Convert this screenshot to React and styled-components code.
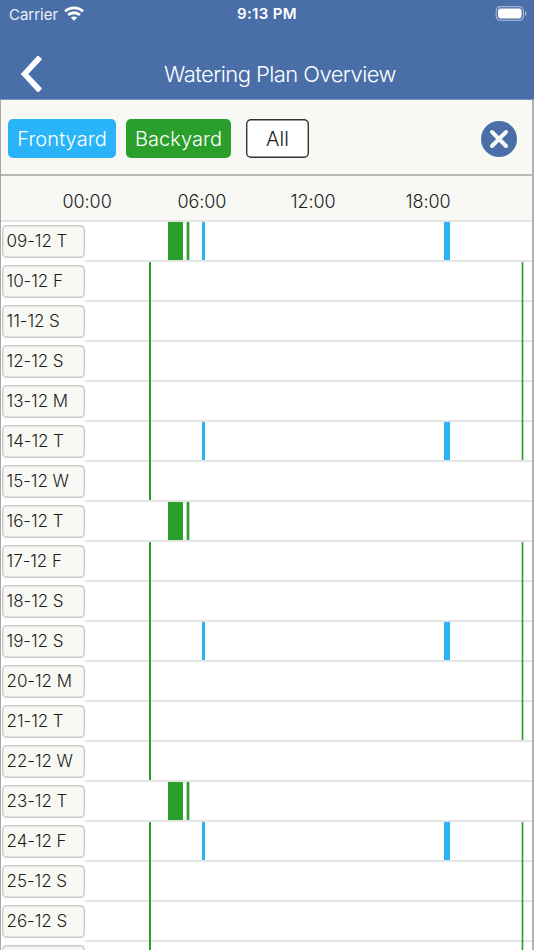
import React from 'react';
import styled, { createGlobalStyle } from 'styled-components';

const BLUE = '#4a6ea8';
const FRONT = '#2ab4f8';
const BACK = '#2a9f2c';

const GlobalStyle = createGlobalStyle`
  *, *::before, *::after { box-sizing: border-box; }
  body { margin: 0; overflow: hidden; font-family: Inter, "Liberation Sans", sans-serif; }
`;

const Screen = styled.div`
  width: 534px;
  height: 950px;
  overflow: hidden;
  display: flex;
  flex-direction: column;
  background: #fff;
`;

const Header = styled.header`
  flex: none;
  height: 100px;
  background: ${BLUE};
  border-bottom: 1px solid #7f94b9;
  color: #fff;
`;

const StatusBar = styled.div`
  display: grid;
  grid-template-columns: 1fr auto 1fr;
  align-items: center;
  height: 28px;
  padding: 0 7px 0 9px;
`;

const Carrier = styled.div`
  display: flex;
  align-items: center;
  gap: 6px;
  font-size: 15px;
  letter-spacing: -0.02px;
  color: #edf1f7;
  svg { margin-top: -2px; }
`;

const Clock = styled.div`
  margin: -1px 2px 0 0;
  font-size: 15px;
  font-weight: 600;
  letter-spacing: 0.32px;
`;

const Battery = styled.svg`
  justify-self: end;
  margin-top: -2px;
`;

const NavBar = styled.div`
  display: grid;
  grid-template-columns: 26px 1fr;
  align-items: center;
  height: 71px;
  padding: 21px 20px 0 20px;
`;

const BackButton = styled.button`
  display: flex;
  padding: 0;
  border: 0;
  background: none;
`;

const Title = styled.h1`
  margin: 0 0 1px;
  text-indent: 0;
  padding-right: 0;
  padding-left: 0;
  font-size: 22px;
  font-weight: 350;
  letter-spacing: -0.57px;
  line-height: 30px;
  text-align: center;
  white-space: nowrap;
`;

const Panel = styled.main`
  flex: 1;
  min-height: 0;
  overflow: hidden;
  border-left: 1px solid #a5a5a5;
  border-right: 2px solid #b2b2b2;
`;

const FilterBar = styled.div`
  display: flex;
  align-items: center;
  height: 76px;
  padding: 3px 15px 0 7px;
  background: #f8f9f4;
  border-bottom: 2px solid #b8b8b6;
`;

const Filter = styled.button`
  width: ${(p) => p.$width}px;
  height: 39px;
  margin-right: ${(p) => p.$gap}px;
  padding: 1px 0 0;
  border: 0;
  box-shadow: ${(p) => (p.$outlined ? 'inset 0 0 0 1.4px #333' : 'none')};
  border-radius: 5px;
  background: ${(p) => p.$color};
  color: ${(p) => (p.$outlined ? '#222' : '#fff')};
  font: 350 20px Inter, "Liberation Sans", sans-serif;
  letter-spacing: 0.08px;
`;

const CloseButton = styled.button`
  display: flex;
  margin-left: auto;
  padding: 0;
  border: 0;
  background: none;
`;

const Axis = styled.div`
  display: grid;
  grid-template-columns: 115px 113px 115px 1fr;
  align-items: center;
  height: 46px;
  padding: 7px 0 0 61.4px;
  background: #f8f9f4;
  border-bottom: 2px solid #e3e4e2;
  color: #1c1c1c;
  font-size: 18px;
  font-weight: 350;
  letter-spacing: -0.05px;
`;

const DayRow = styled.div`
  display: grid;
  grid-template-columns: 84px 1fr;
  height: 40px;
`;

const DayLabel = styled.div`
  height: 33px;
  margin: 3px 0 0 0.6px;
  padding-left: 5px;
  box-shadow: inset 0 0 0 1.4px #c8c8c8;
  border-radius: 5px;
  background: #f8f9f4;
  color: #1c1c1c;
  font-size: 17px;
  font-weight: 350;
  letter-spacing: -0.08px;
  line-height: 32px;
  white-space: nowrap;
`;

const Track = styled.div`
  position: relative;
  border-bottom: 2px solid #e4e4e4;
`;

const Event = styled.div`
  position: absolute;
  top: 0;
  bottom: ${(p) => (p.$joined ? -2 : 0)}px;
  left: ${(p) => p.$start}px;
  width: ${(p) => p.$length}px;
  background: ${(p) => p.$color};
  box-shadow: ${(p) => (p.$soft ? `-1px 0 ${BACK}55, 1px 0 ${BACK}55` : 'none')};
`;

const FRONT_RUNS = [
  { start: 117, length: 3, color: FRONT },
  { start: 359, length: 6, color: FRONT },
];
const LONG_RUNS = [
  { start: 83, length: 15, color: BACK },
  { start: 102, length: 2, color: BACK, soft: true },
];
const EARLY = { start: 64, length: 2, color: BACK };
const LATE = { start: 437, length: 1, color: BACK, soft: true };

const weekdays = ['T', 'F', 'S', 'S', 'M', 'T', 'W'];

const days = Array.from({ length: 18 }, (_, i) => {
  const phase = i % 7;
  const runs = [];
  if (phase === 0) {
    runs.push(...LONG_RUNS);
  } else {
    runs.push({ ...EARLY, joined: phase < 6 });
    if (phase < 6) runs.push({ ...LATE, joined: phase < 5 });
  }
  if (i % 5 === 0) runs.push(...FRONT_RUNS);
  return { label: `${String(9 + i).padStart(2, '0')}-12 ${weekdays[phase]}`, runs };
});
days.push({ label: '', runs: [EARLY, LATE] });

export default function App() {
  return (
    <Screen>
      <GlobalStyle />
      <Header>
        <StatusBar>
          <Carrier>
            Carrier
            <svg width="20" height="15" viewBox="0 0 20 15" fill="none" stroke="#fff" strokeWidth="2.8">
              <path d="M1 5.4C6.1.7 13.9.7 19 5.4" />
              <path d="M4.1 9C7.5 6 12.5 6 15.9 9" />
              <path d="M10 14.8 6.8 11.6c1.8-1.6 4.6-1.6 6.4 0Z" fill="#fff" stroke="none" />
            </svg>
          </Carrier>
          <Clock>9:13 PM</Clock>
          <Battery width="32" height="15" viewBox="0 0 32 15">
            <rect x="1.2" y=".7" width="27.2" height="13.6" rx="4" fill="none" stroke="#a2b4d2" strokeWidth="1.2" />
            <rect x="3" y="2.5" width="23.6" height="10" rx="2.4" fill="#fff" />
            <path d="M30 5v5c2-1 2-4 0-5Z" fill="#a2b4d2" />
          </Battery>
        </StatusBar>
        <NavBar>
          <BackButton aria-label="Back">
            <svg width="24" height="38" viewBox="0 0 24 38" fill="#fff">
              <path d="M17.1 1.2c.5-.6 1.2-.6 1.8 0l2.3 2.1c.6.6.6 1.3 0 1.9L8.3 19l12.9 13.6c.6.6.6 1.3 0 1.9l-2.3 2.2c-.6.6-1.3.6-1.8 0L.8 19Z" />
            </svg>
          </BackButton>
          <Title>Watering Plan Overview</Title>
        </NavBar>
      </Header>
      <Panel>
        <FilterBar>
          <Filter $width={108} $gap={10} $color={FRONT}>Frontyard</Filter>
          <Filter $width={105} $gap={15} $color={BACK}>Backyard</Filter>
          <Filter $width={63} $gap={0} $color="#fff" $outlined>All</Filter>
          <CloseButton aria-label="Close">
            <svg width="36" height="36" viewBox="0 0 36 36">
              <circle cx="18" cy="18" r="18" fill={BLUE} />
              <path
                d="m11 11 14 14M25 11 11 25"
                stroke="#f8f9f4"
                strokeWidth="4"
                strokeLinecap="round"
              />
            </svg>
          </CloseButton>
        </FilterBar>
        <Axis>
          <span>00:00</span>
          <span>06:00</span>
          <span>12:00</span>
          <span>18:00</span>
        </Axis>
        {days.map((day) => (
          <DayRow key={day.label}>
            <DayLabel>{day.label}</DayLabel>
            <Track>
              {day.runs.map((run) => (
                <Event
                  key={run.start}
                  $start={run.start}
                  $length={run.length}
                  $color={run.color}
                  $soft={run.soft}
                  $joined={run.joined}
                />
              ))}
            </Track>
          </DayRow>
        ))}
      </Panel>
    </Screen>
  );
}
